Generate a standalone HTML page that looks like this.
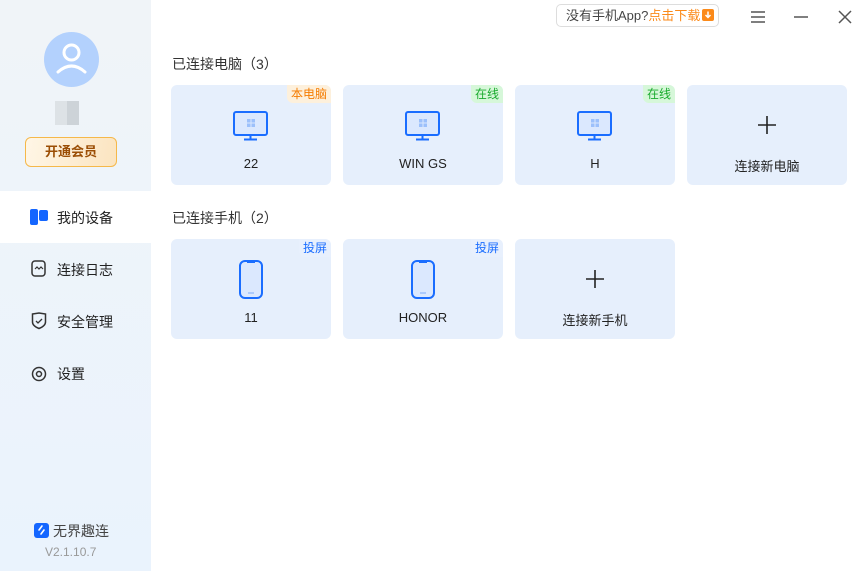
<!DOCTYPE html>
<html><head><meta charset="utf-8"><style>
*{margin:0;padding:0;box-sizing:border-box}
body{width:862px;height:571px;position:relative;background:#fff;font-family:"Liberation Sans","Noto Sans CJK SC",sans-serif;overflow:hidden;color:#222}
.side{position:absolute;left:0;top:0;width:151px;height:571px;background:linear-gradient(#f0f4f8,#eaf3fd)}
.abs{position:absolute}
.nav{position:absolute;left:0;width:151px;height:52px;font-size:14px;color:#222}
.nav span{position:absolute;left:57px;top:17px}
.card{position:absolute;width:160px;height:100px;background:#e6effc;border-radius:6px;overflow:hidden}
.card .n{position:absolute;left:0;right:0;top:71px;text-align:center;font-size:13px;color:#222}
.tag{position:absolute;right:0;top:0;font-size:12px;padding:1px 4px;border-bottom-left-radius:6px;line-height:16px}
.h{position:absolute;left:172px;font-size:14px;color:#333}
</style></head><body>
<div class="side">
<div class="abs" style="left:44px;top:32px;width:55px;height:55px;border-radius:50%;background:#b3d1fd">
<svg width="55" height="55" viewBox="0 0 55 55"><circle cx="27.5" cy="20.5" r="7.5" fill="none" stroke="#fff" stroke-width="3"/><path d="M14 40 Q27.5 28 41 40" fill="none" stroke="#fff" stroke-width="3" stroke-linecap="round"/></svg></div>
<div class="abs" style="left:55px;top:101px;width:24px;height:24px;background:#dde2e6"></div>
<div class="abs" style="left:67px;top:101px;width:12px;height:24px;background:#cdd3d8"></div>
<div class="abs" style="left:25px;top:137px;width:92px;height:30px;border:1px solid #f5b84a;border-radius:6px;background:linear-gradient(100deg,#fff6e6,#fbe4c0);color:#9b4e05;font-size:13px;font-weight:bold;text-align:center;line-height:28px">开通会员</div>
<div class="nav" style="top:191px;background:#fff"><svg class="abs" style="left:30px;top:18px" width="18" height="16"><rect x="0" y="0" width="8" height="16" rx="2" fill="#1466ff"/><rect x="9" y="1" width="9" height="11" rx="2" fill="#1466ff"/></svg><span>我的设备</span></div>
<div class="nav" style="top:243px"><svg class="abs" style="left:31px;top:17px" width="16" height="18"><rect x="1" y="1" width="13" height="15" rx="3" fill="none" stroke="#333" stroke-width="1.5"/><path d="M4 9 l2-2 2 2 2-2 2 2" fill="none" stroke="#333" stroke-width="1.2"/></svg><span>连接日志</span></div>
<div class="nav" style="top:295px"><svg class="abs" style="left:31px;top:17px" width="16" height="18"><path d="M1.5 2 L8 1 L14.5 2 V10 Q14.5 14 8 16.5 Q1.5 14 1.5 10Z" fill="none" stroke="#333" stroke-width="1.5"/><path d="M5 9 l2 2 4-4" fill="none" stroke="#333" stroke-width="1.3"/></svg><span>安全管理</span></div>
<div class="nav" style="top:347px"><svg class="abs" style="left:31px;top:19px" width="16" height="16"><circle cx="8" cy="8" r="6.5" fill="none" stroke="#333" stroke-width="1.5"/><circle cx="8" cy="8" r="2.5" fill="none" stroke="#333" stroke-width="1.5"/></svg><span>设置</span></div>
<div class="abs" style="left:34px;top:523px;width:15px;height:15px;border-radius:3px;background:#1466ff"><svg width="15" height="15"><path d="M8 3 L5 7 M10 7 L7 11" stroke="#fff" stroke-width="1.6" stroke-linecap="round"/></svg></div>
<div class="abs" style="left:53px;top:521px;font-size:14px;color:#444">无界趣连</div>
<div class="abs" style="left:45px;top:545px;font-size:12px;color:#999">V2.1.10.7</div>
</div>

<div class="abs" style="left:556px;top:4px;width:163px;height:23px;border:1px solid #ddd;border-radius:5px;font-size:13px;line-height:21px;padding-left:9px;color:#444">没有手机App?<span style="color:#fb8a1a">点击下载</span><span style="display:inline-block;width:12px;height:12px;background:#fb8a1a;border-radius:2px;vertical-align:-1px;margin-left:2px;position:relative"><svg width="12" height="12" style="position:absolute;left:0;top:0"><path d="M6 2.5V8 M3.5 6 L6 8.5 L8.5 6" stroke="#fff" stroke-width="1.5" fill="none"/></svg></span></div>
<svg class="abs" style="left:750px;top:10px" width="16" height="14"><path d="M1 2H15M1 7H15M1 12H15" stroke="#555" stroke-width="1.5"/></svg>
<svg class="abs" style="left:793px;top:10px" width="16" height="14"><path d="M1 7H15" stroke="#555" stroke-width="1.5"/></svg>
<svg class="abs" style="left:837px;top:9px" width="16" height="16"><path d="M2 2L14 14M14 2L2 14" stroke="#555" stroke-width="1.5"/></svg>

<div class="h" style="top:54px">已连接电脑（3）</div>
<div class="h" style="top:208px">已连接手机（2）</div>

<svg width="0" height="0" style="position:absolute"><defs>
<g id="pc"><rect x="1" y="1" width="33" height="23" rx="2" fill="#dbe8fe" stroke="#1a6dff" stroke-width="2"/><rect x="14" y="8" width="3.5" height="3.5" fill="#9cc0fb"/><rect x="18.5" y="8" width="3.5" height="3.5" fill="#9cc0fb"/><rect x="14" y="12.5" width="3.5" height="3.5" fill="#9cc0fb"/><rect x="18.5" y="12.5" width="3.5" height="3.5" fill="#9cc0fb"/><path d="M17.5 25V28M11 28.5H24" stroke="#1a6dff" stroke-width="2"/></g>
<g id="ph"><rect x="1" y="1" width="22" height="37" rx="5" fill="#dbe8fe" stroke="#1a6dff" stroke-width="2"/><path d="M8 2H16" stroke="#1a6dff" stroke-width="2"/><path d="M9 33H15" stroke="#9cc0fb" stroke-width="1.5"/></g>
</defs></svg>

<div class="card" style="left:171px;top:85px"><div class="tag" style="background:#fdf0dc;color:#f57c00">本电脑</div><svg class="abs" style="left:62px;top:26px" width="35" height="30"><use href="#pc"/></svg><div class="n">22</div></div>
<div class="card" style="left:343px;top:85px"><div class="tag" style="background:#d6f7d9;color:#1aab2e">在线</div><svg class="abs" style="left:62px;top:26px" width="35" height="30"><use href="#pc"/></svg><div class="n">WIN GS</div></div>
<div class="card" style="left:515px;top:85px"><div class="tag" style="background:#d6f7d9;color:#1aab2e">在线</div><svg class="abs" style="left:62px;top:26px" width="35" height="30"><use href="#pc"/></svg><div class="n">H</div></div>
<div class="card" style="left:687px;top:85px"><svg class="abs" style="left:70px;top:30px" width="20" height="20"><path d="M10 1V19M1 10H19" stroke="#222" stroke-width="1.6"/></svg><div class="n">连接新电脑</div></div>

<div class="card" style="left:171px;top:239px"><div class="tag" style="background:#e8f0fd;color:#1a6dff">投屏</div><svg class="abs" style="left:68px;top:21px" width="24" height="39"><use href="#ph"/></svg><div class="n">11</div></div>
<div class="card" style="left:343px;top:239px"><div class="tag" style="background:#e8f0fd;color:#1a6dff">投屏</div><svg class="abs" style="left:68px;top:21px" width="24" height="39"><use href="#ph"/></svg><div class="n">HONOR</div></div>
<div class="card" style="left:515px;top:239px"><svg class="abs" style="left:70px;top:30px" width="20" height="20"><path d="M10 1V19M1 10H19" stroke="#222" stroke-width="1.6"/></svg><div class="n">连接新手机</div></div>
</body></html>
